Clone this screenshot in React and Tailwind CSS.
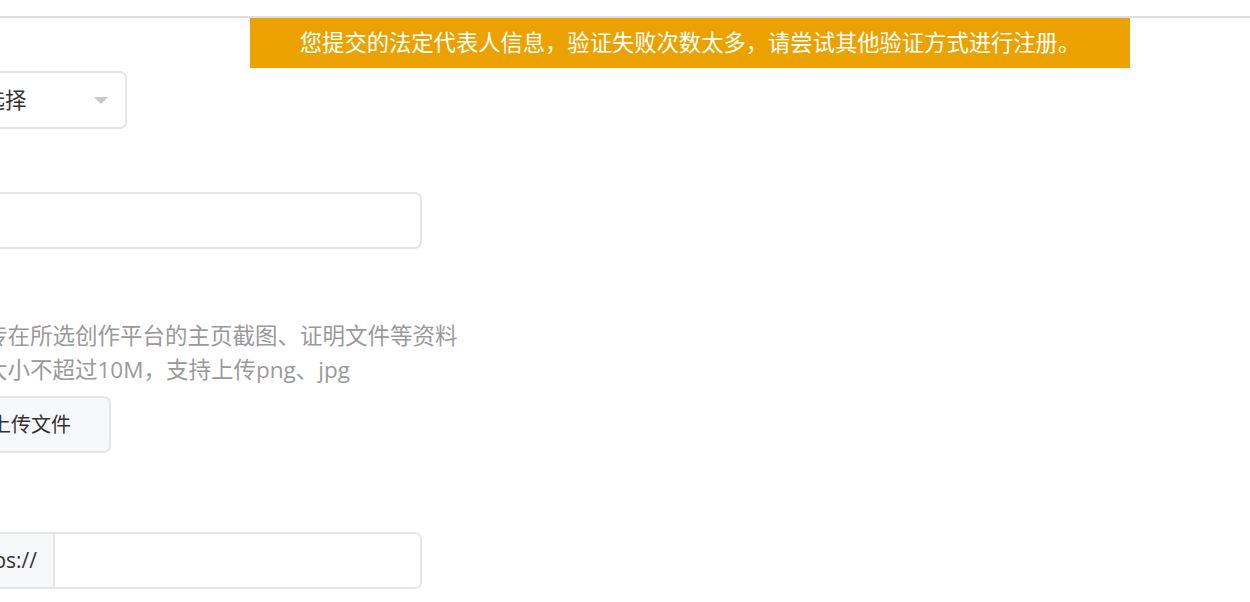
export default function App() {
    return (
        <div className="relative w-[1250px] h-[602px] overflow-hidden bg-white text-[#333] font-['Open_Sans','Noto_Sans_CJK_SC',sans-serif]">
            <div className="h-[16px]" />
            <div className="h-[2px] bg-[#dddee1]" />

            <div className="ml-[-52px] flex flex-col items-start">
                <div className="mt-[53px] w-[179px] h-[58px] flex items-center justify-between pl-[12px] pr-[17px] border-2 border-[#e3e5e8] rounded-[7px] text-[21.5px]">
                    <span>请选择</span>
                    <svg width="14" height="7" viewBox="0 0 14 7">
                        <path d="M0 0 L14 0 L7 7 Z" fill="#c5c8ce" />
                    </svg>
                </div>

                <div className="mt-[63px] w-[474px] h-[57px] border-2 border-[#e3e5e8] rounded-[7px]" />

                <div className="mt-[70px] ml-[-8px] text-[22.5px] leading-[34px] text-[#9a9a9a]">
                    <p>请上传在所选创作平台的主页截图、证明文件等资料</p>
                    <p>文件大小不超过10M，支持上传png、jpg</p>
                </div>

                <button className="mt-[9px] h-[57px] pl-[41px] pr-[38px] bg-[#f7f8fa] border-2 border-[#e3e5e8] rounded-[7px] text-[20px] text-[#333]">
                    上传文件
                </button>

                <div className="mt-[79px] w-[474px] h-[57px] flex border-2 border-[#e3e5e8] rounded-[7px] overflow-hidden">
                    <div className="w-[105px] flex items-center justify-end pr-[16px] bg-[#f7f8fa] border-r-2 border-[#e3e5e8] text-[21px] text-[#333]">
                        https://
                    </div>
                    <div className="flex-1 bg-white" />
                </div>
            </div>

            <div className="absolute top-[18px] left-[250px] w-[880px] h-[50px] flex items-center justify-center bg-[#eba200] text-white text-[22.3px]">
                您提交的法定代表人信息，验证失败次数太多，请尝试其他验证方式进行注册。
            </div>
        </div>
    );
}
